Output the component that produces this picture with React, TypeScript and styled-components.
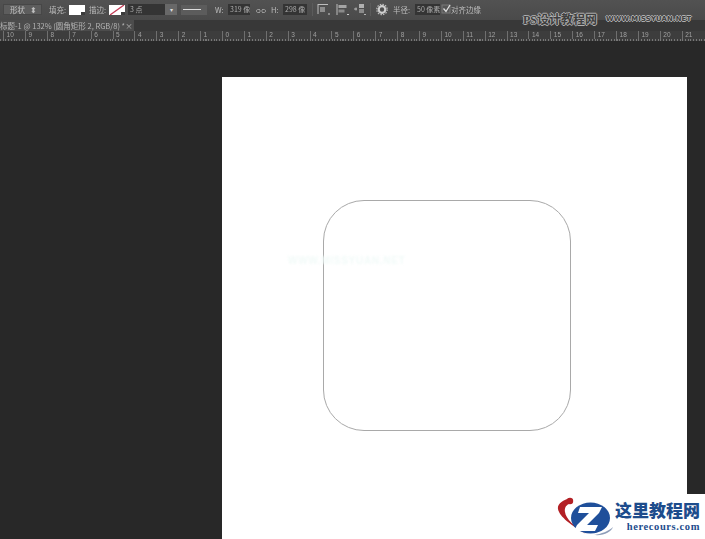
import React from "react";
import styled, { createGlobalStyle } from "styled-components";

const Global = createGlobalStyle`
  html, body { margin: 0; padding: 0; background: #282828; overflow: hidden; }
  #root { width: 705px; height: 539px; }
`;

const Page = styled.div`
  width: 705px; height: 539px; position: relative; overflow: hidden;
  display: flex; flex-direction: column; background: #282828;
  font-family: "Noto Sans CJK SC", "Liberation Sans", sans-serif;
`;

const OptionsBar = styled.div`
  height: 20px; flex: none; box-sizing: border-box; padding: 4px 0 5px 3px;
  display: flex; align-items: center;
  background: linear-gradient(#525252, #4a4a4a);
  color: #bcbcbc; font-size: 7.5px;
`;

const Select = styled.div<{ $w: number; $ml?: number }>`
  width: ${p => p.$w}px; margin-left: ${p => p.$ml ?? 0}px; height: 11px; flex: none;
  box-sizing: border-box; padding: 0 4px 0 6px; display: flex; align-items: center; justify-content: space-between;
  background: #5d5d5d; border: 1px solid #474747; color: #c0c0c0; filter: blur(0.25px);
`;

const Label = styled.span<{ $w: number; $ml?: number }>`
  width: ${p => p.$w}px; margin-left: ${p => p.$ml ?? 0}px; flex: none; white-space: nowrap; line-height: 11px;
  filter: blur(0.3px);
`;

const Swatch = styled.div<{ $ml?: number }>`
  width: 16px; height: 10px; margin-left: ${p => p.$ml ?? 0}px; flex: none; position: relative;
  background: #fff; border: 0; overflow: hidden;
  &::after { content: ""; position: absolute; right: 0; bottom: 0; width: 4px; height: 3px; background: #3b3b3b; }
`;

const SlashSvg = styled.svg`
  position: absolute; inset: 0; width: 100%; height: 100%;
`;

const Field = styled.div<{ $w: number; $ml?: number }>`
  width: ${p => p.$w}px; margin-left: ${p => p.$ml ?? 0}px; height: 11px; flex: none; box-sizing: border-box;
  padding-left: 2px; background: #343434; color: #ababab; line-height: 11px; white-space: nowrap; overflow: hidden;
  font-size: 7px; filter: blur(0.25px);
`;

const StepButton = styled.div`
  width: 12px; height: 11px; flex: none; background: #686868;
  display: flex; align-items: center; justify-content: center; color: #ddd; font-size: 6px; line-height: 11px;
`;

const LineSelect = styled.div<{ $ml: number }>`
  width: 26px; height: 10px; margin-left: ${p => p.$ml}px; flex: none; background: #5c5c5c;
  display: flex; align-items: center; padding-left: 2px; box-sizing: border-box;
  &::before { content: ""; width: 18px; height: 1px; background: #dcdcdc; }
`;

const ToolIcon = styled.svg<{ $ml: number; $w?: number }>`
  width: ${p => p.$w ?? 14}px; height: 13px; flex: none; margin-left: ${p => p.$ml}px;
`;

const Divider = styled.div<{ $ml: number }>`
  width: 1px; height: 13px; flex: none; margin-left: ${p => p.$ml}px; background: #5b5b5b;
`;

const TabBar = styled.div`
  height: 11px; flex: none; background: #383838; display: flex;
`;

const Tab = styled.div`
  width: 134px; box-sizing: border-box; background: #4c4c4c; color: #b4b4b4; font-size: 7.5px; line-height: 11px;
  padding-right: 3px; display: flex; justify-content: space-between; white-space: nowrap; overflow: hidden;
  filter: blur(0.3px);
`;

const Ruler = styled.div`
  height: 10px; flex: none; display: flex; overflow: hidden; background-color: #3d3d3d;
  background-image: repeating-linear-gradient(90deg, #777 0 1px, transparent 1px 2.74px);
  background-size: 100% 2px; background-repeat: no-repeat; background-position: 0 100%;
  padding-left: 3.1px;
`;

const RulerCell = styled.div`
  width: 21.9px; flex: none; box-sizing: border-box; height: 8px; border-left: 1px solid #6f6f6f;
  padding-left: 2.5px; color: #a0a0a0; font-family: "Liberation Sans", sans-serif; font-size: 6.5px; line-height: 7px;
  filter: blur(0.2px);
`;

const Workspace = styled.div`
  flex: 1; min-height: 0; box-sizing: border-box; padding: 36px 0 0 222px; background: #282828;
`;

const Artboard = styled.div`
  width: 465px; height: 500px; background: #fff; box-sizing: border-box; padding: 123px 0 0 101px;
`;

const RoundedShape = styled.div`
  width: 248px; height: 231px; box-sizing: border-box; border: 1px solid #a9a9a9; border-radius: 41px;
`;

const GhostMark = styled.div`
  position: absolute; left: 288px; top: 255px; color: #f1faf8; font: 700 10px "Liberation Sans", sans-serif;
  letter-spacing: 0.7px; filter: blur(0.8px); white-space: nowrap;
`;

const TopMark = styled.div`
  position: absolute; top: 11px; left: 523px; display: flex; align-items: center; gap: 9px; height: 15px;
  color: #3f3f3f; white-space: nowrap;
  text-shadow: 1px 0 0 #b0b0b0, -1px 0 0 #b0b0b0, 0 1px 0 #b0b0b0, 0 -1px 0 #b0b0b0;
`;

const TopMarkTitle = styled.span`
  width: 74px; font: 700 12px "Liberation Serif", "Noto Sans CJK SC", serif;
`;

const TopMarkUrl = styled.span`
  font: 700 6.8px "DejaVu Sans", sans-serif; letter-spacing: 0.2px;
`;

const LogoPanel = styled.div`
  position: absolute; right: 0; bottom: 0; width: 160px; height: 45px; background: #fff;
`;

const LogoBrand = styled.div`
  position: absolute; left: 12px; top: 1px; display: flex; align-items: flex-start; height: 44px;
`;

const LogoSvg = styled.svg`
  width: 58px; height: 44px; flex: none;
`;

const LogoText = styled.div`
  margin-top: 5px; display: flex; flex-direction: column; align-items: flex-end;
`;

const LogoTitle = styled.div`
  font: 900 17px/20px "Noto Sans CJK SC", sans-serif; color: #1d4c8c; white-space: nowrap;
`;

const LogoUrl = styled.div`
  font: 700 10.5px/13px "Liberation Serif", serif; color: #1d4c8c; letter-spacing: 0.6px;
`;

const rulerNumbers = Array.from({ length: 32 }, (_, i) => Math.abs(i - 10));

export default function App() {
  return (
    <Page>
      <Global />
      <OptionsBar>
        <Select $w={39}><span>形状</span><span>⬍</span></Select>
        <Label $w={20} $ml={7}>填充:</Label>
        <Swatch />
        <Label $w={20} $ml={4}>描边:</Label>
        <Swatch>
          <SlashSvg viewBox="0 0 16 10"><line x1="1" y1="10" x2="15" y2="0" stroke="#c23b55" strokeWidth="1.3" /></SlashSvg>
        </Swatch>
        <Field $w={37} $ml={3}>3 点</Field>
        <StepButton>▾</StepButton>
        <LineSelect $ml={4} />
        <Label $w={13} $ml={8}>W:</Label>
        <Field $w={22}>319 像</Field>
        <ToolIcon $ml={4} viewBox="0 0 14 13">
          <path d="M6 6.500H3.500a1.600 1.600 0 0 0 0 3H6M8 6.500h2.500a1.600 1.600 0 0 1 0 3H8M5 8h4" fill="none" stroke="#a0a0a0" strokeWidth="0.9" />
        </ToolIcon>
        <Label $w={12} $ml={3}>H:</Label>
        <Field $w={24}>298 像</Field>
        <Divider $ml={5} />
        <ToolIcon $ml={4} viewBox="0 0 14 13">
          <path d="M1 1v10M1 1.500h10" fill="none" stroke="#bdbdbd" /><rect x="3" y="4" width="5" height="5" fill="#8d8d8d" /><path d="M11 11l2 0" stroke="#ccc" />
        </ToolIcon>
        <ToolIcon $ml={5} viewBox="0 0 14 13">
          <path d="M1 1v11" stroke="#bdbdbd" /><rect x="2.500" y="2" width="8" height="3" fill="#a5a5a5" /><rect x="2.500" y="6.500" width="6" height="3" fill="#8a8a8a" /><path d="M11 11.500h2" stroke="#ccc" />
        </ToolIcon>
        <ToolIcon $ml={3} viewBox="0 0 14 13">
          <rect x="6" y="1" width="5" height="4" fill="#b0b0b0" /><rect x="6" y="6" width="5" height="4" fill="#8a8a8a" /><path d="M1 6h3M3 4.500v3M11 11.500h2" stroke="#b5b5b5" />
        </ToolIcon>
        <Divider $ml={3} />
        <ToolIcon $ml={5} viewBox="0 0 14 13">
          <circle cx="6" cy="6.500" r="3.300" fill="none" stroke="#cfcfcf" strokeWidth="2.200" /><circle cx="6" cy="6.500" r="5.200" fill="none" stroke="#bdbdbd" strokeWidth="1.200" strokeDasharray="1.500 1.200" />
        </ToolIcon>
        <Label $w={19} $ml={3}>半径:</Label>
        <Field $w={25} $ml={3}>50 像素</Field>
        <ToolIcon $ml={1} $w={10} viewBox="0 0 10 13">
          <rect x="1" y="2" width="8" height="8" fill="#565656" stroke="#7a7a7a" /><path d="M2.500 5.500l2.500 3 4-6.500" fill="none" stroke="#e0e0e0" strokeWidth="1.300" />
        </ToolIcon>
        <Label $w={30}>对齐边缘</Label>
      </OptionsBar>
      <TabBar>
        <Tab><span>标题-1 @ 132% (圆角矩形 2, RGB/8) *</span><span>×</span></Tab>
      </TabBar>
      <Ruler>
        {rulerNumbers.map((n, i) => <RulerCell key={i}>{n}</RulerCell>)}
      </Ruler>
      <Workspace>
        <Artboard>
          <RoundedShape />
        </Artboard>
      </Workspace>
      <GhostMark>WWW.MISSYUAN.NET</GhostMark>
      <TopMark>
        <TopMarkTitle>PS设计教程网</TopMarkTitle>
        <TopMarkUrl>WWW.MISSYUAN.NET</TopMarkUrl>
      </TopMark>
      <LogoPanel>
        <LogoBrand>
          <LogoSvg viewBox="0 0 58 44">
            <circle cx="13" cy="6" r="3.200" fill="#b32025" />
            <path d="M13 3C6 5 0 9 1 14c1 6 9 14 28 25-12-8-20-15-21-22C7 12 10 9 15 8z" fill="#b32025" />
            <ellipse cx="33.500" cy="23" rx="19.500" ry="15.500" fill="#1f4f9a" />
            <path d="M23 12h22l-3 6-12 12h11l-3 6H17l3-6 12-12h-11z" fill="#fff" />
            <path d="M37 40c7-1 15-4 19-8-2 5-9 9-19 8z" fill="#8d9db8" />
          </LogoSvg>
          <LogoText>
            <LogoTitle>这里教程网</LogoTitle>
            <LogoUrl>herecours.com</LogoUrl>
          </LogoText>
        </LogoBrand>
      </LogoPanel>
    </Page>
  );
}
